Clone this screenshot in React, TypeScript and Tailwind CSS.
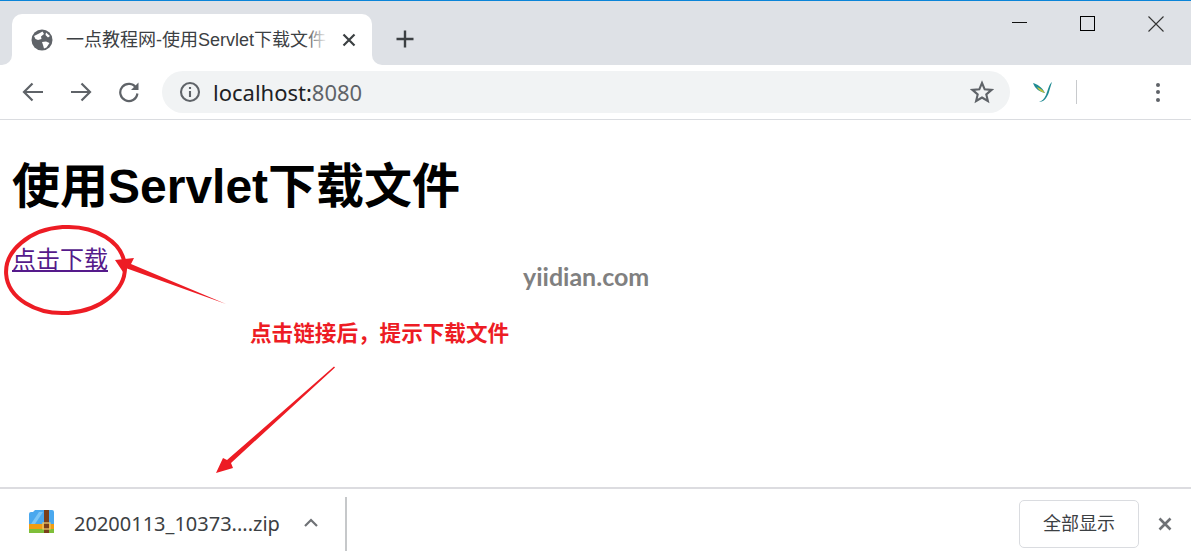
export default function App() {
  const ui = { fontFamily: '"Noto Sans", "Noto Sans CJK SC", sans-serif' };
  const cjk = { fontFamily: '"Liberation Sans", "Noto Sans CJK SC", sans-serif' };
  return (
    <div className="relative flex h-[559px] w-[1191px] flex-col overflow-hidden bg-white" style={ui}>
      {/* Title bar */}
      <div className="relative flex h-[65px] shrink-0 items-end border-t border-t-[#0a84d8] bg-[#dee1e6] pl-3">
        <div className="relative flex h-[51px] w-[360px] items-center rounded-t-[10px] bg-white pl-[19px]">
          <div className="absolute bottom-0 left-[-12px] h-3 w-3 bg-white"><div className="h-3 w-3 rounded-br-[10px] bg-[#dee1e6]" /></div>
          <div className="absolute bottom-0 right-[-12px] h-3 w-3 bg-white"><div className="h-3 w-3 rounded-bl-[10px] bg-[#dee1e6]" /></div>
          <svg width="22" height="22" viewBox="0 0 22 22" className="shrink-0">
            <circle cx="11" cy="11" r="10.5" fill="#5f6368" />
            <path d="M3 7 L8 4.5 L11.5 2.5 L13 5 L10 7.5 L10.5 10 L7 11 L4.5 10 Z M11 13 L15 12.5 L18.5 14 L15.5 18.5 L13 19.5 L12 16 Z M15 3.5 L19 7 L17 8.5 L14.5 6 Z" fill="#fff" />
          </svg>
          <div className="relative ml-[13px] w-[262px] overflow-hidden whitespace-nowrap text-[18px] leading-[26px] text-[#3c4043]" style={cjk}>
            一点教程网-使用Servlet下载文件
            <div className="absolute inset-y-0 right-0 w-6 bg-gradient-to-r from-transparent to-white" />
          </div>
          <svg width="14" height="14" viewBox="0 0 14 14" className="ml-[14px] shrink-0">
            <path d="M1.5 1.5 L12.5 12.5 M12.5 1.5 L1.5 12.5" stroke="#3c4043" strokeWidth="2.2" />
          </svg>
        </div>
        <svg width="18" height="18" viewBox="0 0 18 18" className="mb-[17px] ml-[24px]">
          <path d="M9 0.5 V17.5 M0.5 9 H17.5" stroke="#3c4043" strokeWidth="2.4" />
        </svg>
        <div className="absolute right-[27px] top-[15px] flex items-start gap-[53px]">
          <div className="mt-[6px] h-[1px] w-[15px] bg-[#111]" />
          <div className="h-[15px] w-[15px] border border-black" />
          <svg width="16" height="16" viewBox="0 0 16 16"><path d="M0.5 0.5 L15.5 15.5 M15.5 0.5 L0.5 15.5" stroke="#333" strokeWidth="1.1" /></svg>
        </div>
      </div>

      {/* Toolbar */}
      <div className="flex h-[55px] shrink-0 items-center border-b border-b-[#dadce0] bg-white pl-[22px]">
        <svg width="22" height="20" viewBox="0 0 22 20"><path d="M21 10 H2 M10.5 1.5 L2 10 L10.5 18.5" fill="none" stroke="#5f6368" strokeWidth="2.2" /></svg>
        <svg width="22" height="20" viewBox="0 0 22 20" className="ml-[26px]"><path d="M1 10 H20 M11.5 1.5 L20 10 L11.5 18.5" fill="none" stroke="#5f6368" strokeWidth="2.2" /></svg>
        <svg width="22" height="22" viewBox="0 0 22 22" className="ml-[26px]">
          <path d="M18.2 7 A8.6 8.6 0 1 0 19.4 12.5" fill="none" stroke="#5f6368" strokeWidth="2.2" />
          <path d="M20.5 1.5 V9 H13 Z" fill="#5f6368" />
        </svg>
        <div className="ml-[22px] flex h-[42px] w-[848px] items-center rounded-full bg-[#f1f3f4] pl-[17px] pr-[16px]">
          <svg width="22" height="22" viewBox="0 0 22 22" className="shrink-0">
            <circle cx="11" cy="11" r="9" fill="none" stroke="#5f6368" strokeWidth="2.1" />
            <path d="M11 10 V16 M11 6 V8" stroke="#5f6368" strokeWidth="2.1" />
          </svg>
          <div className="ml-[12px] text-[22px] leading-[30px]"><span className="text-[#202124]">localhost:</span><span className="text-[#5f6368]">8080</span></div>
          <svg width="24" height="24" viewBox="0 0 24 24" className="ml-auto shrink-0">
            <path d="M12 3 L14.7 9.3 L21.5 9.9 L16.3 14.4 L17.9 21 L12 17.5 L6.1 21 L7.7 14.4 L2.5 9.9 L9.3 9.3 Z" fill="none" stroke="#5f6368" strokeWidth="2.1" strokeLinejoin="miter" />
          </svg>
        </div>
        <svg width="22" height="24" viewBox="0 0 22 24" className="ml-[22px] shrink-0">
          <path d="M1 3 C5 4 10 7 13 13 C8 12 3 9 1 3 Z" fill="#1f8a92" />
          <path d="M5 7 C8 8 11 10 13 13 C9 12 6 10 5 7 Z" fill="#c9c63a" />
          <path d="M20 2 C17 4 16 10 14 15 C12 19 10 21 7 22 C12 22 15 18 17 12 C18 8 19 5 20 2 Z" fill="#1f8a92" />
        </svg>
        <div className="ml-[22px] h-[24px] w-[1px] bg-[#c8cacd]" />
        <div className="ml-[79px] flex flex-col gap-[3.5px]">
          <div className="h-1 w-1 rounded-full bg-[#5f6368]" />
          <div className="h-1 w-1 rounded-full bg-[#5f6368]" />
          <div className="h-1 w-1 rounded-full bg-[#5f6368]" />
        </div>
      </div>

      {/* Page */}
      <div className="relative min-h-0 flex-1 px-3" style={cjk}>
        <h1 className="mt-[32px] text-[48px] font-bold leading-[70px] text-black">使用Servlet下载文件</h1>
        <a href="#" className="mt-[21px] block w-fit text-[24px] leading-[34px] text-[#551a8b] underline">点击下载</a>
      </div>

      {/* Download shelf */}
      <div className="flex h-[72px] shrink-0 items-center border-t-2 border-t-[#dcdce0] bg-white pl-[29px] pr-[19px]">
        <svg width="25" height="23" viewBox="0 0 25 23" className="mb-[5px] shrink-0">
          <path d="M0 4 Q0 2 2 2 L4 2 L6 0 L23 0 Q25 0 25 2 L25 14 L0 14 Z" fill="#4aa8ee" />
          <path d="M2 14 L10 2 L14 2 L6 14 Z" fill="#7cc6f6" />
          <rect x="0" y="14" width="25" height="5" fill="#f29d12" />
          <rect x="0" y="19" width="25" height="4" fill="#7fbf3a" />
          <rect x="15" y="0" width="5" height="23" fill="#7a3f1a" />
          <rect x="14" y="13" width="7" height="6" fill="none" stroke="#e9c66b" strokeWidth="1.3" />
        </svg>
        <span className="ml-[20px] text-[20px] leading-[28px] text-[#3c4043]">20200113_10373....zip</span>
        <svg width="14" height="9" viewBox="0 0 14 9" className="ml-[24px] mb-[4px] shrink-0"><path d="M1 8 L7 2 L13 8" fill="none" stroke="#6f7276" strokeWidth="2.2" /></svg>
        <div className="ml-[27px] h-[54px] w-[2px] bg-[#c6c8ca]" />
        <button className="ml-auto flex h-[48px] w-[120px] items-center justify-center rounded-[5px] border border-[#dadce0] bg-white text-[18px] text-[#3c4043]" style={cjk}>全部显示</button>
        <svg width="14" height="14" viewBox="0 0 14 14" className="ml-[19px] shrink-0"><path d="M1.5 1.5 L12.5 12.5 M12.5 1.5 L1.5 12.5" stroke="#6f7276" strokeWidth="2.6" /></svg>
      </div>

      {/* Annotations over the page */}
      <svg width="1191" height="559" className="pointer-events-none absolute left-0 top-0">
        <ellipse cx="65.5" cy="270" rx="59.5" ry="43" fill="none" stroke="#ed1c24" strokeWidth="4" transform="rotate(-4 65.5 270)" />
        <polygon points="115,260 134,258 131,264 226,304 127,268.5 125,275" fill="#ed1c24" />
        <polygon points="334,366.5 335,367.5 231,463 233,468 216,473 223,458 227,460" fill="#ed1c24" />
      </svg>
      <div className="absolute left-[250px] top-[319px] whitespace-nowrap text-[21.6px] font-bold leading-[30px] text-[#ed1c24]" style={cjk}>点击链接后，提示下载文件</div>
      <div className="absolute left-[523px] top-[259px] whitespace-nowrap text-[25px] font-bold leading-[34px] text-[#808080]" style={{ fontFamily: '"Lato", sans-serif' }}>yiidian.com</div>
    </div>
  );
}
